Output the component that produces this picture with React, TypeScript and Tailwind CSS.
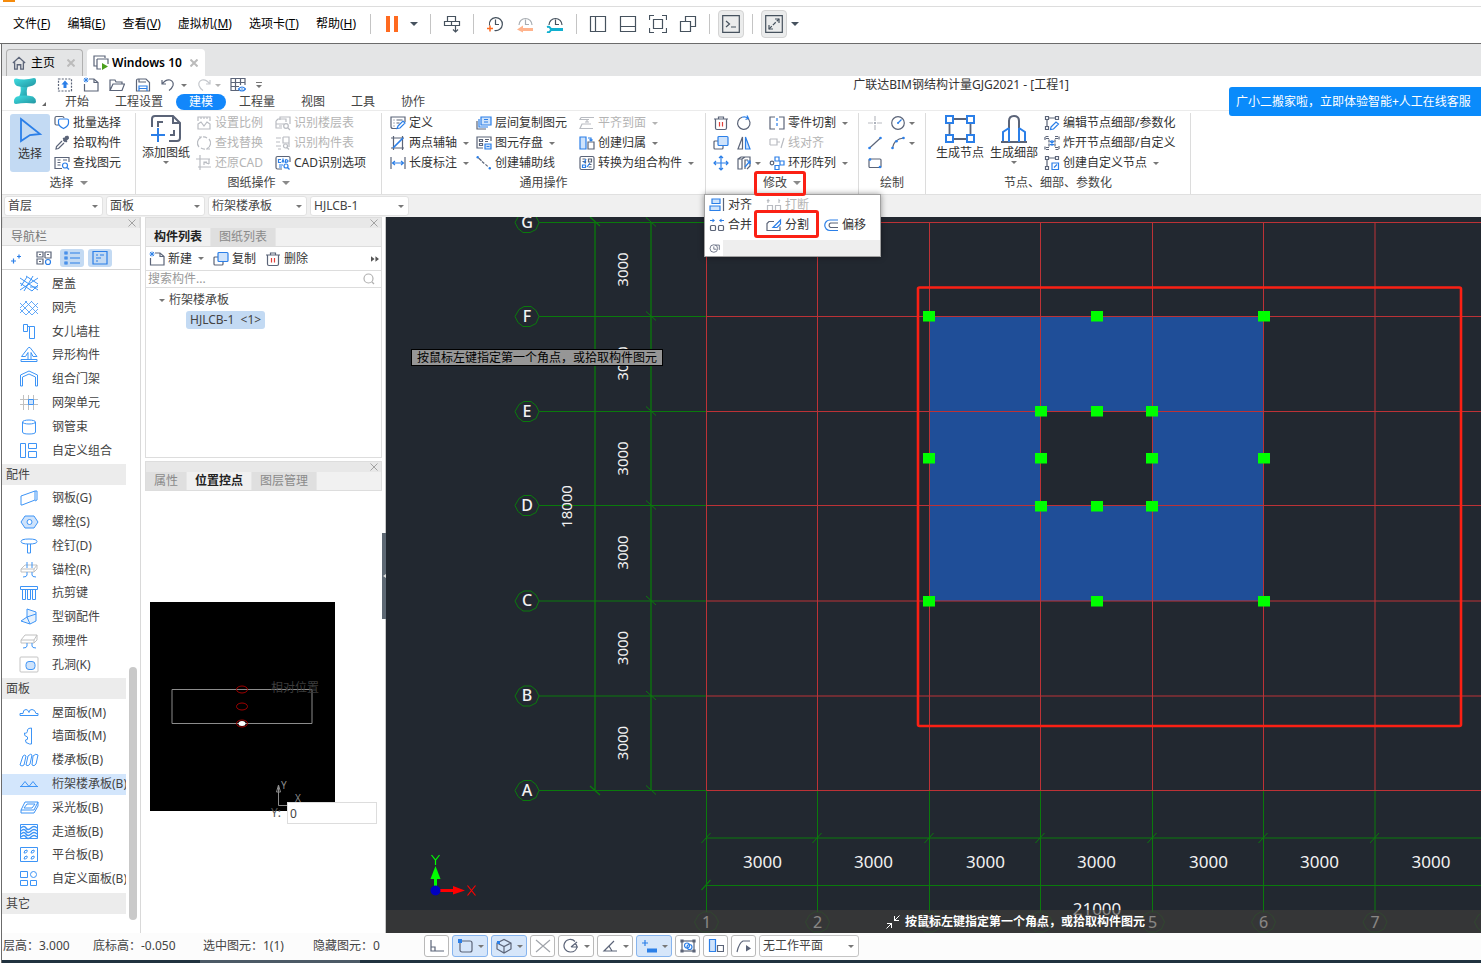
import React from "react";
import type { ReactNode } from "react";

const G = "#5b6478";
const B = "#2b7fe8";
const L = "#cfe3fb";
const D = "#b9bcc2";

/* ---------- small shared pieces ---------- */

function Ico({ children, size = 16, box = 16, color = G, stroke = 1.2 }: { children: ReactNode; size?: number; box?: number; color?: string; stroke?: number }) {
  return (
    <svg width={size} height={size} viewBox={`0 0 ${box} ${box}`} fill="none" stroke={color} strokeWidth={stroke} className="shrink-0" aria-hidden="true">
      {children}
    </svg>
  );
}

function Caret({ big = false, off = false }: { big?: boolean; off?: boolean }) {
  return big ? (
    <svg width="8" height="4" viewBox="0 0 8 4" className="shrink-0" aria-hidden="true"><path d="M0 0h8L4 4z" fill="#46525e" /></svg>
  ) : (
    <svg width="6" height="3" viewBox="0 0 6 3" className="shrink-0" aria-hidden="true"><path d="M0 0h6L3 3z" fill={off ? "#b4b4b4" : "#777777"} /></svg>
  );
}

function Cross({ light = false }: { light?: boolean }) {
  return (
    <svg width="8" height="8" viewBox="0 0 8 8" stroke={light ? "#bbbbbb" : "#a2a2a2"} strokeWidth={light ? 2 : 1} className="shrink-0" aria-hidden="true">
      <path d="M.5.5l7 7M7.500.5l-7 7" />
    </svg>
  );
}

/* ---------- ribbon icons, 16 x 16 ---------- */

const icons: Record<string, ReactNode> = {
  batch: <><path d="M5 10H2.500Q1 10 1 8.500V3q0-1.500 1.500-1.500H8Q10 1.500 10 3" /><path d="M4.500 5.500q0-1.500 1.500-1.500h7q1.500 0 1.500 1.500v2.500q0 3-5 5.500-5-2.500-5-5.500z" stroke={B} fill="#fff" /></>,
  dropper: <><path d="M9 3l4 4M8 6L2.500 11.500 2 14l2.500-.5L10 8" /><path d="M10 5l2-3q2-1 2 1l-3 3z" fill={G} strokeWidth={2} /></>,
  find: <><path d="M15 7V2.500H1v11h7" /><path d="M3.500 5h3M3.500 7.500h3M3.500 10h3M9 5h4" /><circle cx="11" cy="10.500" r="2.500" stroke={B} /><path d="M13 12.500l2 2" stroke={B} /></>,
  scale: <g stroke={D}><path d="M2 6V2h12v4M5 2v2M8 2v2M11 2v2M2 9v5h12V9l-3-2-3 4-3-4z" /></g>,
  replace: <g stroke={D}><path d="M5 2.500A6 6 0 003 12M6 2L3 2M11 13.500A6 6 0 0013 4M10 14l4 0M7 2a6 6 0 014 1M9 14a6 6 0 01-4-1" /></g>,
  restore: <g stroke={D}><path d="M0 4h14M4 0v12h11M13 4v5M13 9L8 7M8 10V7h3M2 12h2v3" /></g>,
  floorTable: <g stroke={D}><path d="M5 5V2h10v7M1 6l2-2h8v3M1 6v7h6M1 9h8M4 11h3" /><circle cx="11" cy="11" r="2.300" /><path d="M13 13l2 2" /></g>,
  partTable: <g stroke={D}><path d="M1 3h5M1 7h4M1 11h5M3 14h3M8 2h6v10M8 2v6h6" /><circle cx="10.500" cy="11" r="2" /><path d="M12 12.500l2 2" /></g>,
  cad: <><path d="M15 7V3q0-1.500-1.500-1.500h-11Q1 1.500 1 3v9.500Q1 14 2.500 14H7" /><path d="M6 4.500H3.500v3H6M7 7.500l1-3 1 3M10.500 4.500v3q2.500-.2 2.500-1.500t-2.500-1.500M4 10h4M4 12h3" stroke={B} /><circle cx="11" cy="11" r="2" stroke={B} /><path d="M12.500 12.500l2 2" stroke={B} /></>,
  define: <><path d="M15 7V2H1v9.500q0 2 2 2h4" /><path d="M3.500 5h1M6.500 5h6M3.500 8h1M6.500 8h3M3.500 11h1" /><path d="M8 11l5-5 2 2-5 5-3 .5z" stroke={B} fill="#fff" /></>,
  axis: <><path d="M1 3h13M1 13h13M3.500 1v14M12.500 1v14" /><path d="M3 13L13 3" stroke={B} strokeWidth={1.700} /></>,
  length: <><path d="M1 2v12M15 2v12" /><path d="M2.500 8h11M5 6L2.500 8 5 10M11 6l2.500 2L11 10" stroke={B} /></>,
  layerCopy: <><path d="M1 6v8h9" /><path d="M3 4v8h9" stroke={B} /><path d="M5 2h10v8H5z" stroke={B} fill={L} /><path d="M8 4.500h4M8 7h4" stroke={B} /></>,
  save: <><path d="M15 6V2H1v11h6" /><path d="M3.500 4.500h3v2h-3zM3.500 8.500h3v2h-3zM9 4.500h4M9 6.500h3" /><path d="M9 9h6v5H9zM10.500 11.500h3" stroke={B} fill={L} /></>,
  helper: <><path d="M2.500 3l3 2.700" stroke={G} /><path d="M6 6.500l6.500 5.500" strokeDasharray="3 1.500" /><circle cx="1.700" cy="2.200" r="1.200" fill={B} stroke="none" /><circle cx="13.800" cy="13.300" r="1.200" fill={B} stroke="none" /></>,
  flush: <g stroke={D}><path d="M2 2.500h13M2 2.500l-1 2h9M12 9H3l-2 4.500h13M8 5v2M6 7h4" /></g>,
  belong: <><path d="M1 2h6v12H1z" stroke={B} fill={L} /><path d="M9 7h6v7H9z" /><path d="M9 3h3v3M10.500 4.500L12 6l1.500-1.500" stroke={B} /></>,
  convert: <><rect x="1" y="1.500" width="14" height="13" rx="1.500" /><path d="M3.500 4h3M3.500 6.500h3v2M9.500 4v3h3V4zM9.500 9.500h3M9.500 12h3" /><path d="M7 4L5 8M11 8l-3 4M3.500 10h3v2.500h-3z" stroke={B} /></>,
  trash: <><path d="M1 4h14M5.500 4V2h5v2M2.500 4v9q0 1.500 1.500 1.500h8q1.500 0 1.500-1.500V4" /><path d="M6.500 7v4.500M9.500 7v4.500" stroke="#e0403a" /></>,
  rotate: <><path d="M11 2.800A6.200 6.200 0 116 2.200" /><path d="M6 2.200a6.200 6.200 0 016 1M11 .5l1.500 3-3 1" stroke={B} /></>,
  copy: <><path d="M5 6H2Q1 6 1 7v6q0 1 1 1h7q1 0 1-1v-2" /><rect x="5" y="1.500" width="10" height="9" rx="1" stroke={B} fill={L} /></>,
  mirror: <><path d="M6.500 2v12H2z" /><path d="M9.500 2v12H14z" stroke={B} fill={L} /></>,
  move: <g stroke={B}><path d="M8 1v14M1 8h14M6 3l2-2 2 2M6 13l2 2 2-2M3 6L1 8l2 2M13 6l2 2-2 2" /></g>,
  stretch: <><path d="M2 4l3-2h9v9l-3 3M2 4h4v10H2zM6 4l3-2M9 14V5h3" /><path d="M9 12l5-6M14 9V6h-3" stroke={B} /></>,
  cut: <><path d="M6 2H1v12h5M10 2h5v12h-5" /><path d="M8 3v10" stroke={B} strokeDasharray="3 2" /></>,
  lineAlign: <g stroke={D}><path d="M1 4h7v6H1M1 4v6M15 3l-3 10M8 7h3" /></g>,
  ring: <><circle cx="3" cy="8" r="1.800" /><g stroke={B}><path d="M6 2h4v4H6zM11 6h4v4h-4zM6 10.500h4v4H6z" /></g></>,
  point: <g stroke={D}><path d="M1 8h5M10 8h5M8 1v5M8 10v5" /><path d="M7 8h2" stroke={G} /></g>,
  circle: <><circle cx="8" cy="8" r="6.300" /><path d="M8 8l3.500-3.500" stroke={B} /><circle cx="8" cy="8" r="1" fill={B} stroke="none" /></>,
  line: <><path d="M2.500 13L13.500 3" /><circle cx="2.500" cy="13" r="1.300" fill={B} stroke="none" /><circle cx="13.500" cy="3" r="1.300" fill={B} stroke="none" /></>,
  arc: <><path d="M2.500 13Q4 4 13.500 3" /><circle cx="2.500" cy="13" r="1.300" fill={B} stroke="none" /><circle cx="6.500" cy="6.300" r="1.300" fill={B} stroke="none" /><circle cx="13.500" cy="3" r="1.300" fill={B} stroke="none" /></>,
  rect: <><rect x="2" y="4" width="12" height="8.500" rx="1" /><circle cx="3" cy="4.500" r="1.300" fill={B} stroke="none" /><circle cx="13" cy="12" r="1.300" fill={B} stroke="none" /></>,
  editNode: <><path d="M1.500 1.500h3v3h-3zM11.500 1.500h3v3h-3zM1.500 11.500h3v3h-3zM4.500 3h7M3 4.500v7" /><path d="M7 12l5-5 2.500 2-5 5-3 .5z" stroke={B} /></>,
  burst: <><path d="M1 5V1.500h4M11 1.500h4V5M15 11v3.500h-4M5 14.500H1V11M2 3.500h3v9H2M14 3.500h-3v9h3" strokeDasharray="3 1" /><path d="M6 6l4 4M10 6l-4 4M8 5v6" stroke={B} /></>,
  newNode: <><path d="M1.500 1.500h3v3h-3zM11.500 1.500h3v3h-3zM1.500 11.500h3v3h-3zM4.500 3h7M3 4.500v7" /><path d="M8 8h6.500v6.500H8zM10 12.500l3-3" stroke={B} /></>,
  align: <><path d="M3 2h8v4.500H3zM1 9h10v4.500H1z" stroke={B} fill={L} /><path d="M14.500 1v13" /></>,
  breakIt: <g stroke={D}><path d="M1.500 8.500h5v5h-5zM9.500 8.500h5v5h-5zM2 6V3l-1 1M13 6V3l1 1M2 3l1.500 1" /></g>,
  merge: <><rect x="1.500" y="8.500" width="5" height="5" rx="1" /><rect x="9.500" y="8.500" width="5" height="5" rx="1" /><path d="M1 3.500h3M15 3.500h-3" stroke={B} /><path d="M3.500 1.500l2.500 2-2.500 2zM12.500 1.500l-2.500 2 2.500 2z" fill={B} stroke="none" /></>,
  split: <><path d="M8 4.500H3l-2 2v7h13V9.500" /><path d="M7 10.500l7.500-7.500v4l-3.500 3.500z" stroke={B} /></>,
  offset: <><path d="M15 3H7a5 5 0 000 10.500h8" stroke={B} /><path d="M15 6H7.500a2.500 2.500 0 000 4.500H15" /></>,
  newFile: <><path d="M6 2h5l4 3.500V14H1.500V7" /><path d="M11 2v3.500h4" /><path d="M1 1l4 4M5 1L1 5M3 .5v5M.5 3h5" stroke={B} strokeWidth={0.900} /></>,
  upload: <><rect x="1.500" y="2" width="13" height="12" strokeDasharray="2 1.300" /><path d="M8 3.500l3.500 4h-2V11h-3V7.500h-2z" fill={B} stroke="none" /></>,
  open: <path d="M1 13.500V3h5l1 2h6v2M1 13.500L4 7h11.500l-2.500 6.500z" />,
  disk: <><path d="M1.500 3.500q0-1.500 1.500-1.500h8l3.500 3.500V14h-13zM4 2v3h7" /><path d="M4 14V9h8v5M4 11.500h8" stroke={B} /></>,
  undo: <path d="M2 3l0 4h4M2 7q4-5 8-4 4 1.500 3 5.500-1 3-4 5" />,
  redo: <path d="M14 3v4h-4M14 7q-4-5-8-4-4 1.500-3 5.500 1 3 4 5" stroke="#c5c8cd" />,
  gridEye: <><path d="M9 13.500H1v-12h14V8M1 5.500h14M1 9.500h8M5.500 1.500v12M10.500 1.500V8" /><path d="M8.500 12q3.500-4 7 0-3.500 4-7 0z" stroke={B} /><circle cx="12" cy="12" r=".8" fill={B} stroke="none" /></>,
  search: <><circle cx="7.500" cy="7.500" r="4.500" stroke="#b0b0b0" /><path d="M11 11l2 2" stroke="#b0b0b0" /></>,
};

function Tool({ icon, label, caret, off }: { icon: string; label?: string; caret?: boolean; off?: boolean }) {
  return (
    <button disabled={off} aria-label={label ?? icon} className={`flex h-5 items-center gap-[3px] whitespace-nowrap ${off ? "text-[#b4b4b4]" : "text-[#333]"}`}>
      <Ico>{icons[icon]}</Ico>
      {label && <span>{label}</span>}
      {caret && <span className={label ? "ml-[3px]" : ""}><Caret off={off} /></span>}
    </button>
  );
}

function Group({ w, label, caret, children, extra }: { w: string; label: string; caret?: boolean; children: ReactNode; extra?: ReactNode }) {
  return (
    <section className={`relative flex shrink-0 flex-col border-r border-[#dcdcdc] ${w}`}>
      <div className="flex h-[60px] items-start">{children}</div>
      <div className="flex h-5 items-center justify-center gap-[6px] text-[#444]">
        {label}
        {caret && <svg width="8" height="4" viewBox="0 0 8 4" aria-hidden="true"><path d="M0 0h8L4 4z" fill="#8a8a8a" /></svg>}
      </div>
      {extra}
    </section>
  );
}

function BigTool({ label, children, active, caret }: { label: string; children: ReactNode; active?: boolean; caret?: boolean }) {
  return (
    <button className={`flex h-[58px] flex-col items-center whitespace-nowrap rounded-[3px] text-[#333] ${active ? "mt-[1px] w-10 bg-[#c3daf3]" : "w-[54px]"}`}>
      <span className="flex h-8 items-center">{children}</span>
      <span className="leading-4">{label}</span>
      {caret && <Caret />}
    </button>
  );
}

/* ---------- navigation icons, 20 x 20 ---------- */

const nav: Record<string, ReactNode> = {
  roof: <path d="M1 4l18 12M1 9l12 8M7 2l12 8M19 4L1 16M14 2L5 17M19 13h-8M2 12l6-9M13 17l6-6" />,
  shell: <path d="M1 5l12 12M1 11l6 6M6 3l13 13M12 3l7 7M19 5L7 17M13 3L1 15M8 3L1 10M19 11l-6 6" strokeOpacity=".8" />,
  parapet: <path d="M4.500 2.500h4v7h-4zM10.500 4.500h5v12h-5zM8.500 4.500h2" />,
  special: <path d="M2 14.500h16v2H2zM9.500 2.500L2.500 11.500h4l2.500-4v7h3v-7l2 4h4l-7-9z" />,
  portal: <path d="M1.500 17V6L10 2l8.500 4v11h-2V8L10 5 3.500 8v9z" />,
  gridUnit: <><path d="M1 6.500h18M1 11.500h18M4.500 2v15M9.500 2v15M14.500 2v15" stroke="#c0c0c0" /><path d="M9.500 6.500h5v5h-5z" fill="#cfe3fb" /></>,
  tube: <><ellipse cx="10" cy="5" rx="6.500" ry="2" /><path d="M3.500 5v10q0 2 6.500 2t6.500-2V5" /></>,
  combo: <path d="M1.500 2.500h5v14h-5zM9.500 2.500h8v5h-8zM9.500 10.500h8v6h-8z" />,
  plate: <path d="M2 8l14-5v9L3 17H2zM16 3h2v9l-2 1" />,
  bolt: <><path d="M6 4h9l4 6-4 6H6l-4-6z" fill="#cfe3fb" /><circle cx="10.500" cy="10" r="2.500" fill="#fff" /></>,
  stud: <path d="M2 5.500q0-2.500 8-2.500t8 2.500-8 2.500-8-2.500zM8.500 8v9h3V8" />,
  anchor: <><path d="M2 9l4-4h12v4l-3 3H2zM2 9h13v3M15 9l3-4" stroke="#c0c0c0" /><path d="M8 2v6M13 2v6M8 12v3q0 2-4 2M13 12v3q0 2 4 2" /></>,
  shear: <path d="M1.500 3.500h17v3h-17zM3.500 6.500v10h3v-10M8.500 6.500v10h3v-10M13.500 6.500v10h3v-10" />,
  steel: <path d="M8 2l9 3v9l-6 3-9-3 6-4zM8 10l9-3M8 10l3 7" fill="#e6f1fd" />,
  embed: <><path d="M2 9l4-5h12v5l-3 3H2zM2 9h13v3M15 9l3-5" stroke="#c0c0c0" /><path d="M8 12v3q0 2-4 2M13 12v3q0 2 4 2" /></>,
  hole: <><rect x="1" y="2" width="18" height="15" stroke="#c4c4c4" rx="1" /><rect x="7" y="6.500" width="9" height="8" rx="3" fill="#cfe3fb" /></>,
  roofPanel: <path d="M1 12.500h18v-2h-2q-1-4-4-4t-3 3q-1-3-3-3-3 0-3 4H1z" />,
  wallPanel: <path d="M12.500 2v16h-2q-5-1-4-4 3 0 2-3-4-1-3-4 3 1 3-3 0-2 4-2z" />,
  floorPanel: <path d="M1 15L4 6q2-2 3 0L5 15q-2 2-4 0zM7 15l2-9q3-3 4-1l-2 9q-2 3-4 1zM13 15l1-9q3-3 5-1l-2 9q-2 3-4 1z" />,
  truss: <path d="M1 12.500h18M2 12.500l4-5 4 5 4-5 4 5" />,
  light: <path d="M6 4h13l-4 8H2zM2 12v3h13l4-7V4M8 6h8l-3 4H5z" />,
  walkway: <><path d="M1.500 2.500h17v14h-17z" /><path d="M2 6q3-3 5 0t5 0 6 0M2 9q3-3 5 0t5 0 6 0M2 12q3-3 5 0t5 0 6 0M2 15q3-3 5 0t5 0 6 0" strokeWidth="1.500" /></>,
  platform: <><path d="M1.500 2.500h17v14h-17z" /><path d="M5 8q0-3 3-3 1 3-3 3zM12 8q0-3 3-3 1 3-3 3zM5 14q0-3 3-3 1 3-3 3zM12 14q0-3 3-3 1 3-3 3z" /></>,
  customPanel: <><path d="M1.500 2.500h7v6h-7zM1.500 11.500h7v5h-7zM11.500 11.500h6v5h-6z" /><circle cx="14.500" cy="5.500" r="3" /></>,
};

const navRows: { icon?: string; label: string }[] = [
  { icon: "roof", label: "屋盖" }, { icon: "shell", label: "网壳" }, { icon: "parapet", label: "女儿墙柱" },
  { icon: "special", label: "异形构件" }, { icon: "portal", label: "组合门架" }, { icon: "gridUnit", label: "网架单元" },
  { icon: "tube", label: "钢管束" }, { icon: "combo", label: "自定义组合" }, { label: "配件" },
  { icon: "plate", label: "钢板(G)" }, { icon: "bolt", label: "螺栓(S)" }, { icon: "stud", label: "栓钉(D)" },
  { icon: "anchor", label: "锚栓(R)" }, { icon: "shear", label: "抗剪键" }, { icon: "steel", label: "型钢配件" },
  { icon: "embed", label: "预埋件" }, { icon: "hole", label: "孔洞(K)" }, { label: "面板" },
  { icon: "roofPanel", label: "屋面板(M)" }, { icon: "wallPanel", label: "墙面板(M)" }, { icon: "floorPanel", label: "楼承板(B)" },
  { icon: "truss", label: "桁架楼承板(B)" }, { icon: "light", label: "采光板(B)" }, { icon: "walkway", label: "走道板(B)" },
  { icon: "platform", label: "平台板(B)" }, { icon: "customPanel", label: "自定义面板(B)" }, { label: "其它" },
];

/* ---------- bars ---------- */

const menus = [["文件", "F"], ["编辑", "E"], ["查看", "V"], ["虚拟机", "M"], ["选项卡", "T"], ["帮助", "H"]];

function Sep() {
  return <span className="h-5 w-px shrink-0 bg-[#c4c4c4]" />;
}

function HostIcon({ name, children }: { name: string; children: ReactNode }) {
  return (
    <button aria-label={name} className="shrink-0">
      <Ico size={18} box={18} color="#46525e">{children}</Ico>
    </button>
  );
}

function MenuBar() {
  return (
    <div className="flex h-[37px] items-center border-b border-[#6b6b6b] bg-white pb-[2px] pl-[13px] text-black">
      <nav className="flex gap-[17px]">
        {menus.map(([t, k]) => (
          <button key={k} className="whitespace-nowrap">{t}(<u className="underline-offset-1">{k}</u>)</button>
        ))}
      </nav>
      <div className="ml-[14px] flex items-center">
        <Sep />
        <button aria-label="暂停" className="ml-[15px] flex gap-1"><span className="h-4 w-1 bg-[#ff6a1f]" /><span className="h-4 w-1 bg-[#ff6a1f]" /></button>
        <span className="mx-3 flex"><Caret big /></span>
        <Sep />
        <div className="mx-3 flex"><HostIcon name="发送"><path d="M4.500 1.500h8v5h-8zM1.500 6.500h15v4h-15zM8.500 6.500v4M12.500 11v6M10 14.500l2.500 2.500 2.500-2.500" /></HostIcon></div>
        <Sep />
        <div className="mx-3 flex gap-3">
          <HostIcon name="快照"><path d="M3.500 10.500a6.500 6.500 0 115 5M9.500 4.500v5h3.500" /><path d="M1 13.500h6M4 10.500v6" stroke="#ff6a1f" strokeWidth="1.500" /></HostIcon>
          <HostIcon name="恢复快照"><path d="M3 10a6.500 6.500 0 1113 0M9.500 4.500v5h3.500" stroke="#a8adb2" /><path d="M6 14.500h11" stroke="#ffb38c" strokeWidth="3" /><path d="M1 14.500l6-4v7z" fill="#ffb38c" stroke="none" /></HostIcon>
          <HostIcon name="管理快照"><path d="M3 10a6.500 6.500 0 1113 0M9.500 4.500v5h3.500" /><path d="M5 14.500h12" stroke="#11b0d0" strokeWidth="3" /><path d="M1 12q3-1 4 2.500-1 3.500-4 2.500" stroke="#11b0d0" strokeWidth="2" /></HostIcon>
        </div>
        <Sep />
        <div className="mx-3 flex gap-3">
          <HostIcon name="侧栏"><path d="M1.500 1.500h15v15h-15zM6.500 1.500v15" /></HostIcon>
          <HostIcon name="缩略图栏"><path d="M1.500 1.500h15v15h-15zM1.500 11.500h15" /></HostIcon>
          <HostIcon name="全屏"><path d="M4.500 4.500h9v9h-9zM.5 5V.5H5M13 .5h4.500V5M17.500 13v4.500H13M5 17.500H.5V13" /></HostIcon>
          <HostIcon name="独占"><path d="M1.500 6.500h10v10h-10zM6.500 6.500v-5h10v10h-5" /></HostIcon>
        </div>
        <Sep />
        <span className="mx-2 flex h-7 w-[26px] items-center justify-center rounded border border-[#d4d4d4] bg-[#ebecec]">
          <HostIcon name="控制台"><path d="M.7.7h16.600v16.600H.7zM4 6l3.500 3L4 12M9 12h5" /></HostIcon>
        </span>
        <Sep />
        <span className="mx-2 flex h-7 w-[26px] items-center justify-center rounded border border-[#d4d4d4] bg-[#ebecec]">
          <HostIcon name="拉伸"><path d="M.7.7h16.600v16.600H.7zM10 4h4v4M8 14H4v-4" /><path d="M4 14L14 4" strokeDasharray="4 1.500" /></HostIcon>
        </span>
        <span className="-ml-1 flex"><Caret big /></span>
      </div>
    </div>
  );
}

function HostTabs() {
  return (
    <div className="flex h-8 items-end gap-1 bg-[#e4e5e6] pl-1 text-black">
      <div className="flex h-[27px] w-[77px] items-center rounded-t border border-b-0 border-[#b0b0b0] pl-[5px]">
        <Ico size={14}><path d="M1 8l7-6.500L15 8M3 7v8h3v-5h4v5h3V7" strokeWidth="1.500" /></Ico>
        <span className="ml-[5px]">主页</span>
        <span className="ml-3"><Cross light /></span>
      </div>
      <div className="flex h-[27px] w-[118px] items-center rounded-t bg-white pl-[6px]">
        <Ico><path d="M4 11H1V1h11v2" /><path d="M4 4h11v5M4 4v10h4" /><path d="M9 8l6 3.500L9 15z" fill="#4ba01c" stroke="none" /></Ico>
        <span className="ml-[3px] whitespace-nowrap font-semibold">Windows 10</span>
        <span className="ml-auto mr-[7px]"><Cross light /></span>
      </div>
    </div>
  );
}

function TitleArea() {
  return (
    <div className="relative flex h-[35px] border-b border-[#ebebeb] bg-white">
      <button aria-label="应用菜单" className="relative w-[50px] shrink-0">
        <svg width="46" height="34" viewBox="0 0 46 34" aria-hidden="true">
          <defs>
            <linearGradient id="web" x1="0" y1="0" x2="1" y2="1"><stop offset="0" stopColor="#3fe0e4" /><stop offset="1" stopColor="#22939f" /></linearGradient>
          </defs>
          <path d="M18 8q2 7-1 13l9 1q-3-7 1-14z" fill="url(#web)" />
          <path d="M12 4q0-1.500 2-1.500 9 2 18-.5 2 0 2 2 .5 4-3 5.500-8 3-16 .5-3-1.500-3-6z" fill="url(#web)" />
          <path d="M12 25q0-3 3-4.500 8-2 16 0 3 2 3 5 0 2-2 2-10-1-18 .5-2.500 0-2-3z" fill="url(#web)" />
          <path d="M44 26v4h-4z" fill="#666" />
        </svg>
      </button>
      <div className="flex grow flex-col">
        <div className="flex h-[18px] items-center pl-[5px]">
          <div className="flex items-center gap-[10px]">
            {["upload", "newFile", "open", "disk"].map((n) => <button key={n} aria-label={n}><Ico>{icons[n]}</Ico></button>)}
          </div>
          <button aria-label="undo" className="ml-[9px] flex items-center gap-[5px]"><Ico>{icons.undo}</Ico><Caret /></button>
          <button aria-label="redo" className="ml-[9px] flex items-center gap-[3px]"><Ico>{icons.redo}</Ico><Caret off /></button>
          <button aria-label="grid" className="ml-[9px] flex items-center gap-[10px]"><Ico>{icons.gridEye}</Ico><svg width="6" height="6" viewBox="0 0 6 6" aria-hidden="true"><path d="M0 0h6v1H0zM0 3h6L3 6z" fill="#777" /></svg></button>
          <h1 className="ml-auto mr-[412px] whitespace-nowrap text-[#333]">广联达BIM钢结构计量GJG2021 - [工程1]</h1>
        </div>
        <div className="flex h-4 text-[#444]">
          {["开始", "工程设置", "建模", "工程量", "视图", "工具", "协作"].map((t) => (
            <button key={t} className={`h-4 px-[13px] leading-4 ${t === "建模" ? "rounded-full bg-[#1287fb] text-white" : ""}`}>{t}</button>
          ))}
        </div>
      </div>
      <a href="#service" className="absolute right-0 top-[11px] z-10 flex h-[29px] w-[252px] items-center whitespace-nowrap rounded-l-[3px] bg-[#0a8bfb] pl-[7px] text-white">广小二搬家啦，立即体验智能+人工在线客服</a>
    </div>
  );
}

function ModifyMenu() {
  return (
    <>
      <span className="pointer-events-none absolute left-12 top-[58px] z-30 h-[25px] w-[52px] rounded-[3px] border-[3px] border-[#fb2014]" />
      <div className="absolute -left-[2px] top-[81px] z-20 flex h-[63px] w-[177px] flex-col border border-[#a0a0a0] bg-white shadow-[0_0_6px_rgba(0,0,0,0.4)]">
        <div className="grid grid-cols-[57px_57px_auto] pl-1">
          <Tool icon="align" label="对齐" />
          <Tool icon="breakIt" label="打断" off />
          <span />
          <Tool icon="merge" label="合并" />
          <div className="relative">
            <Tool icon="split" label="分割" />
            <span className="pointer-events-none absolute -left-3 -top-[5px] h-7 w-[65px] rounded-[3px] border-[3px] border-[#fb2014]" />
          </div>
          <Tool icon="offset" label="偏移" />
        </div>
        <div className="mt-auto flex h-4 bg-[#eeeeee]">
          <button aria-label="固定" className="flex w-[18px] items-center justify-center bg-white"><Ico size={11}><circle cx="7" cy="8" r="5.500" /><path d="M7 5v4h4M9 3h6v7" /></Ico></button>
        </div>
      </div>
    </>
  );
}

function Ribbon() {
  return (
    <div className="flex h-[84px] border-b border-[#e0e0e0] bg-white pt-[2px]">
      <Group w="w-[134px]" label="选择" caret>
        <div className="pl-2"><BigTool label="选择" active><Ico size={28} box={28} color={B}><path d="M5 3l19 15-10 1-9 6z" strokeWidth="1.800" /></Ico></BigTool></div>
        <div className="pl-1"><Tool icon="batch" label="批量选择" /><Tool icon="dropper" label="拾取构件" /><Tool icon="find" label="查找图元" /></div>
      </Group>
      <Group w="w-[246px]" label="图纸操作" caret>
        <div className="pl-[3px]">
          <BigTool label="添加图纸" caret>
            <Ico size={32} box={32}><path d="M2 14V6q0-3 3-3h18l7 7v15q0 3-3 3h-8M8 14V9h5M20 22h4v-5M23 3v7h7" strokeWidth="2" /><path d="M1 22h14M8 15v14" stroke={B} strokeWidth="2" /></Ico>
          </BigTool>
        </div>
        <div className="pl-[3px]"><Tool icon="scale" label="设置比例" off /><Tool icon="replace" label="查找替换" off /><Tool icon="restore" label="还原CAD" off /></div>
        <div className="pl-3"><Tool icon="floorTable" label="识别楼层表" off /><Tool icon="partTable" label="识别构件表" off /><Tool icon="cad" label="CAD识别选项" /></div>
      </Group>
      <Group w="w-[324px]" label="通用操作">
        <div className="w-[94px] pl-2"><Tool icon="define" label="定义" /><Tool icon="axis" label="两点辅轴" caret /><Tool icon="length" label="长度标注" caret /></div>
        <div className="w-[103px]"><Tool icon="layerCopy" label="层间复制图元" /><Tool icon="save" label="图元存盘" caret /><Tool icon="helper" label="创建辅助线" /></div>
        <div><Tool icon="flush" label="平齐到面" caret off /><Tool icon="belong" label="创建归属" caret /><Tool icon="convert" label="转换为组合构件" caret /></div>
      </Group>
      <Group w="w-[153px]" label="修改" caret extra={<ModifyMenu />}>
        <div className="w-[30px] pl-[7px]"><Tool icon="trash" /><Tool icon="copy" /><Tool icon="move" /></div>
        <div className="w-[33px]"><Tool icon="rotate" /><Tool icon="mirror" /><Tool icon="stretch" caret /></div>
        <div><Tool icon="cut" label="零件切割" caret /><Tool icon="lineAlign" label="线对齐" off /><Tool icon="ring" label="环形阵列" caret /></div>
      </Group>
      <Group w="w-[67px]" label="绘制">
        <div className="w-[31px] pl-2"><Tool icon="point" /><Tool icon="line" /><Tool icon="rect" /></div>
        <div><Tool icon="circle" caret /><Tool icon="arc" caret /></div>
      </Group>
      <Group w="w-[265px]" label="节点、细部、参数化">
        <div className="flex pl-[7px]">
          <BigTool label="生成节点">
            <Ico size={30} box={30}><path d="M8 5h14M8 25h14M4.500 9v12M25.500 9v12" strokeWidth="1.800" /><path d="M1 2h7v7H1zM22 2h7v7h-7zM1 21h7v7H1zM22 21h7v7h-7z" stroke={B} strokeWidth="2" /></Ico>
          </BigTool>
          <BigTool label="生成细部" caret>
            <Ico size={30} box={30}><path d="M10 27V7q0-5 5-5t5 5v20M2 28h26" strokeWidth="2" /><path d="M4 27v-9l6-4M26 27v-9l-6-4M10 14v14M20 14v14" stroke={B} strokeWidth="2" /></Ico>
          </BigTool>
        </div>
        <div className="pl-[3px]"><Tool icon="editNode" label="编辑节点细部/参数化" /><Tool icon="burst" label="炸开节点细部/自定义" /><Tool icon="newNode" label="创建自定义节点" caret /></div>
      </Group>
    </div>
  );
}

function Combo({ label, value, w, h }: { label: string; value: string; w: string; h: string }) {
  return (
    <label className={`relative flex items-center ${w}`}>
      <span className="sr-only">{label}</span>
      <select defaultValue={value} className={`w-full appearance-none rounded-[3px] border bg-white py-0 pl-[3px] leading-[18px] text-[#444] outline-none ${h}`}>
        <option>{value}</option>
      </select>
      <span className="pointer-events-none absolute right-[5px] flex"><Caret /></span>
    </label>
  );
}

function PanelStrip() {
  return (
    <div className="flex h-[11px] shrink-0 items-center justify-end border border-b-0 border-[#dddddd] bg-[#e8e8e8] pr-[3px]">
      <button aria-label="关闭" className="flex"><Cross /></button>
    </div>
  );
}

function PanelTabs({ tabs, active }: { tabs: string[]; active: number }) {
  return (
    <div className="flex h-[19px] shrink-0 border border-t-0 border-[#dddddd] bg-[#f1f1f1]">
      {tabs.map((t, i) => (
        <button key={t} className={`border-r border-[#e6e6e6] px-2 ${i === active ? "bg-[#f0f0f0] font-bold text-[#222]" : "bg-[#dfdfdf] text-[#8a8a8a]"}`}>{t}</button>
      ))}
    </div>
  );
}

function NavPanel() {
  return (
    <aside className="flex w-[139px] shrink-0 flex-col border-r border-[#d9d9d9] bg-white">
      <PanelStrip />
      <h2 className="h-[18px] shrink-0 border-b border-[#dddddd] bg-[#f1f1f1] pl-[9px] leading-[18px] text-[#777]">导航栏</h2>
      <div className="flex h-6 shrink-0 items-center border-b border-[#d5d5d5] pl-[6px]">
        <button aria-label="添加"><Ico color={B}><path d="M3 11h5M5.500 8.500v5M9 6.500h4M11 4.500v4" /></Ico></button>
        <button aria-label="分组" className="ml-3"><Ico><path d="M1 2h6v5H1zM9 2h6v6H9M9 2v6M1 9h6v5H1zM3 4.500h2M11 4.500h2M3 11.500h2" /><circle cx="12" cy="12" r="2.500" stroke={B} /></Ico></button>
        <button aria-label="列表" className="ml-2 flex h-[18px] w-6 items-center justify-center rounded-[3px] bg-[#c3daf3]"><Ico color={B}><path d="M1 2h2v2H1zM1 7h2v2H1zM1 12h2v2H1zM6 3h10M6 8h10M6 13h10" /></Ico></button>
        <button aria-label="卡片" className="ml-1 flex h-[18px] w-6 items-center justify-center rounded-[3px] bg-[#c3daf3]"><Ico color={B}><path d="M1 1.500h14v12.500H1zM4 5h2M8 5h4M4 8h5M4 11h2" /></Ico></button>
      </div>
      <div className="flex min-h-0 grow pb-[18px] pt-[2px]">
        <ul className="grid h-full w-[124px] auto-rows-fr overflow-hidden text-[#444]">
          {navRows.map((r) =>
            r.icon ? (
              <li key={r.label} className="flex min-h-0 items-center">
                <button className={`flex h-[21px] w-full items-center whitespace-nowrap pl-[17px] ${r.icon === "truss" ? "bg-[#d3e6fc]" : ""}`}>
                  <Ico size={20} box={20} color="#3d94f6" stroke={1}>{nav[r.icon]}</Ico>
                  <span className="ml-[13px]">{r.label}</span>
                </button>
              </li>
            ) : (
              <li key={r.label} className="flex min-h-0 items-center"><h3 className="h-[21px] w-full bg-[#ececec] pl-1 leading-[21px]">{r.label}</h3></li>
            )
          )}
        </ul>
        <div className="-mb-[5px] ml-[3px] flex w-2 flex-col justify-end"><span className="h-[39%] rounded-full bg-[#c9c9c9]" /></div>
      </div>
    </aside>
  );
}

function ComponentPanel() {
  return (
    <div className="ml-1 flex w-[237px] shrink-0 flex-col">
      <section className="flex h-[241px] shrink-0 flex-col">
        <PanelStrip />
        <PanelTabs tabs={["构件列表", "图纸列表"]} active={0} />
        <div className="flex grow flex-col border border-t-0 border-[#dddddd]">
          <div className="flex h-6 shrink-0 items-center gap-[9px] border-b border-[#dddddd] pl-[3px] text-[#333]">
            <Tool icon="newFile" label="新建" caret />
            <Tool icon="copy" label="复制" />
            <Tool icon="trash" label="删除" />
            <button aria-label="更多" className="ml-auto mr-[2px] flex"><svg width="8" height="6" viewBox="0 0 9 6" aria-hidden="true"><path d="M0 0l4 3-4 3zM5 0l4 3-4 3z" fill="#555" /></svg></button>
          </div>
          <div className="flex h-[17px] shrink-0 items-center border-b border-[#dddddd]">
            <input aria-label="搜索构件" placeholder="搜索构件..." className="h-4 min-w-0 grow bg-transparent pl-[2px] outline-none placeholder:text-[#999]" />
            <span className="mr-1"><Ico>{icons.search}</Ico></span>
          </div>
          <div className="pl-[13px] pt-1 text-[#444]">
            <div className="flex h-4 items-center gap-1"><Caret />桁架楼承板</div>
            <button className="ml-[27px] mt-[3px] flex h-[18px] items-center whitespace-pre rounded-[3px] bg-[#c3daf3] px-1">{"HJLCB-1  <1>"}</button>
          </div>
        </div>
      </section>
      <section className="mt-[3px] flex grow flex-col">
        <PanelStrip />
        <PanelTabs tabs={["属性", "位置控点", "图层管理"]} active={1} />
        <div className="relative ml-[5px] mt-[111px] h-[223px] w-[228px]">
          <svg width="185" height="209" viewBox="0 0 185 209" fill="none" className="block bg-black" aria-hidden="true">
            <path d="M22 87.500h140v34H22z" stroke="#8c8c8c" />
            <g stroke="#a00000"><ellipse cx="92" cy="87.500" rx="5.500" ry="3.500" /><ellipse cx="92" cy="104.500" rx="5.500" ry="3.500" /><ellipse cx="92" cy="121.500" rx="5.500" ry="3.500" /></g>
            <ellipse cx="92" cy="121.500" rx="3.500" ry="2.500" fill="#fff" />
            <path d="M128.500 184v19.500h10M128.500 183l-2 7h4z" stroke="#8c8c8c" />
            <text x="131" y="187" fontSize="10" fill="#8c8c8c">Y</text>
            <text x="145" y="200" fontSize="10" fill="#8c8c8c">X</text>
          </svg>
          <span className="absolute left-[121px] top-[78px] text-[#3c3c3c]">相对位置</span>
          <label htmlFor="offset-y" className="absolute left-[121px] top-[203px] text-[#555]">Y:</label>
          <input id="offset-y" defaultValue="0" className="absolute left-[137px] top-[200px] h-[22px] w-[90px] border border-[#dddddd] bg-white pl-[2px] text-[#444] outline-none" />
        </div>
      </section>
    </div>
  );
}

/* ---------- drawing canvas ---------- */

const xs = [706.5, 817.5, 929.5, 1040.5, 1152.5, 1263.5, 1375, 1486.5];
const ys = [222.5, 316.5, 411.5, 505.5, 601, 696, 790.5];
const grips = [
  [929, 316], [1097, 316], [1264, 316], [929, 458], [1264, 458], [929, 601], [1097, 601], [1264, 601],
  [1041, 411], [1097, 411], [1152, 411], [1041, 458], [1152, 458], [1041, 506], [1097, 506], [1152, 506],
];

function Canvas() {
  return (
    <main className="relative min-w-0 grow overflow-hidden bg-[#222830]">
      <svg className="block h-full w-full font-['Noto_Sans']" viewBox="386 217 1095 716" preserveAspectRatio="xMinYMin slice" role="img" aria-label="轴网平面图">
        <path d="M929 316h335v285H929zM1041 411v95h111v-95z" fill="#1f4e98" fillRule="evenodd" />
        <g stroke="#bc3236" strokeWidth="1">
          {xs.map((x) => <line key={x} x1={x} x2={x} y1={222} y2={790.5} />)}
          {ys.map((y) => <line key={y} x1={706.5} x2={1481} y1={y} y2={y} />)}
        </g>
        <g stroke="#0a7a0c" strokeWidth="1" fill="none">
          {ys.map((y) => (
            <g key={y}>
              <line x1="539" x2="706" y1={y} y2={y} />
              <path d={`M646 ${y - 5}l10 9`} />
              <polygon points={`515,${y} 519,${y - 7} 524,${y - 10} 531,${y - 10} 536,${y - 6} 539,${y} 536,${y + 7} 530,${y + 10} 523,${y + 10} 518,${y + 6}`} />
            </g>
          ))}
          <path d="M595 222v569M651 222v569M590 217l10 9M590 786l10 9" strokeWidth="1.300" />
          {xs.map((x) => (
            <g key={x}>
              <line x1={x} x2={x} y1="791" y2="912" />
              <path d={`M${x - 5} 843l9-10`} />
              <polygon strokeOpacity=".5" points={`${x - 12},922 ${x - 8},915 ${x - 3},912 ${x + 4},912 ${x + 9},916 ${x + 12},922 ${x + 9},929 ${x + 3},932 ${x - 4},932 ${x - 9},928`} />
            </g>
          ))}
          <path d="M706 838h775M706 885.500h775M701.500 890l9-10" strokeWidth="1.200" />
        </g>
        <g fill="#f2f2f2" textAnchor="middle" fontSize="16" fontWeight="500">
          {ys.map((y, i) => <text key={y} x="527" y={y + 5}>{"GFEDCBA"[i]}</text>)}
        </g>
        <g fill="#f2f2f2" textAnchor="middle" fontSize="17">
          {xs.slice(0, 7).map((x) => <text key={x} x={x + 56} y="868">3000</text>)}
          <text x="1097" y="915">21000</text>
          {xs.slice(0, 7).map((x, i) => <text key={`n${x}`} x={x} y="928" fontSize="16">{i + 1}</text>)}
        </g>
        <g fill="#f2f2f2" textAnchor="middle" fontSize="15">
          {ys.slice(0, 6).map((y) => <text key={y} transform={`translate(628 ${y + 47}) rotate(-90)`}>3000</text>)}
          <text transform="translate(572 506.500) rotate(-90)">18000</text>
        </g>
        {grips.map(([x, y]) => <rect key={`${x}-${y}`} x={x - 6} y={y - 5} width="12" height="10.500" fill="#00ff00" />)}
        <rect x="918" y="287.500" width="543" height="438.500" rx="1.500" fill="none" stroke="#fb2014" strokeWidth="2.600" />
        <path d="M435.500 889v-10" stroke="#00ff00" strokeWidth="3" />
        <path d="M435.500 866l5 13h-10z" fill="#00ff00" />
        <path d="M439 890.500h14" stroke="#f00" strokeWidth="3" />
        <path d="M453 886l12 4.500-12 4z" fill="#f00" />
        <circle cx="435.500" cy="890.500" r="5" fill="#0000c0" />
        <path d="M431.500 855l4 5 4-5M435.500 860v5" stroke="#00ff00" strokeWidth="1.200" fill="none" />
        <path d="M467.500 885.500l8 10M475.500 885.500l-8 10" stroke="#f00" strokeWidth="1.200" />
      </svg>
      <div className="absolute left-[25px] top-[132px] flex h-[17px] items-center whitespace-nowrap border border-black bg-[#969696] px-[5px] text-black">按鼠标左键指定第一个角点，或拾取构件图元</div>
      <div className="absolute inset-x-0 bottom-0 flex h-[23px] items-center bg-[#43403c]/60 pl-[500px] text-white">
        <svg width="14" height="14" viewBox="0 0 14 14" stroke="#fff" fill="none" aria-hidden="true"><path d="M13.500.5L8 6M8.500 1v4.500H13M.5 13.500L6 8M1 8.500h4.500V13" /></svg>
        <span className="ml-[5px] whitespace-nowrap font-bold">按鼠标左键指定第一个角点，或拾取构件图元</span>
      </div>
    </main>
  );
}

/* ---------- status bar ---------- */

const snaps: { name: string; on?: boolean; caret?: boolean; art: ReactNode }[] = [
  { name: "正交", art: <path d="M2 2v11h13M2 9h4v4" /> },
  { name: "矩形选择", on: true, caret: true, art: <><rect x="3" y="3" width="12" height="11" rx="2" /><path d="M1 1h4v4H1z" fill={B} stroke="none" /></> },
  { name: "体选择", on: true, caret: true, art: <><path d="M1 5l7-3.500L15 5v6l-7 4-7-4zM1 5l7 3.500L15 5M8 8.500V15" /><path d="M1 3h3v3H1z" fill={B} stroke="none" /></> },
  { name: "取消捕捉", art: <path d="M1 2l14 12M15 2L1 14" stroke="#a0a4aa" /> },
  { name: "极轴", caret: true, art: <><path d="M12 3.500A6.300 6.300 0 107.500 14q5.500 0 6.500-5" /><path d="M8 9l6-5M8 9h7M12 5.500q2 1.500 2 3.500" /></> },
  { name: "角度", caret: true, art: <path d="M15 13H2L12 3M7 8l3 5" /> },
  { name: "动态输入", on: true, caret: true, art: <g stroke={B}><path d="M1 5h6M4 2v6" /><path d="M6 12.500h10" strokeWidth="4" /></g> },
  { name: "范围", art: <><rect x="2" y="3" width="12" height="10" /><path d="M1 2h2v2H1zM13 2h2v2h-2zM1 12h2v2H1zM13 12h2v2h-2z" fill={G} /><circle cx="7" cy="7.500" r="2.500" stroke={B} /><circle cx="9.500" cy="9" r="2.500" stroke={B} /></> },
  { name: "对比", art: <><path d="M1.500 1.500h6v12h-6z" stroke={B} fill={L} /><path d="M9.500 7.500h6v6h-6z" /></> },
  { name: "路径", art: <><path d="M1 14Q3 5 7 3h7" /><path d="M10 7l5 3.500-5 3z" fill={G} stroke="none" /></> },
];

function StatusBar() {
  return (
    <footer className="flex h-[27px] shrink-0 items-center bg-[#fcfcfc] pb-px text-[#444]">
      <div className="grid w-[422px] shrink-0 grid-cols-[90px_110px_110px_auto] whitespace-nowrap pl-px">
        <span>层高：3.000</span><span>底标高：-0.050</span><span>选中图元：1(1)</span><span>隐藏图元：0</span>
      </div>
      <div className="flex gap-[3px]">
        {snaps.map((s) => (
          <button key={s.name} aria-label={s.name} className={`flex h-[22px] items-center justify-center gap-[5px] rounded-[3px] border ${s.caret ? "w-9" : "w-[25px]"} ${s.on ? "border-[#86b4ee] bg-[#d6e6fa]" : "border-[#b9b9b9] bg-white"}`}>
            <Ico>{s.art}</Ico>
            {s.caret && <Caret />}
          </button>
        ))}
        <Combo label="工作平面" value="无工作平面" w="w-[100px]" h="h-[22px] border-[#c4c4c4]" />
      </div>
    </footer>
  );
}

export default function App() {
  return (
    <div className="flex h-screen min-h-[760px] flex-col overflow-hidden bg-white font-['Noto_Sans','Noto_Sans_CJK_SC',sans-serif] text-[12px] leading-4">
      <div className="h-[7px] shrink-0 border-b border-[#dddddd] pl-[3px]"><div className="h-[2px] w-3 bg-[#f58b0c]" /></div>
      <div className="shrink-0"><MenuBar /></div>
      <div className="ml-px flex min-h-0 grow flex-col border-l border-[#6b6b6b]">
        <div className="shrink-0"><HostTabs /><TitleArea /><Ribbon /></div>
        <div className="flex h-[22px] shrink-0 items-center gap-[3px] bg-[#f0f0f0] pl-[2px]">
          {[["楼层", "首层"], ["类别", "面板"], ["构件类型", "桁架楼承板"], ["构件", "HJLCB-1"]].map(([k, v]) => (
            <Combo key={k} label={k} value={v} w="w-[99px]" h="h-5 border-[#e2e2e2]" />
          ))}
        </div>
        <div className="flex min-h-0 grow">
          <NavPanel />
          <ComponentPanel />
          <div className="flex w-1 shrink-0 flex-col border-r border-[#c8c8c8] pt-[316px]">
            <button aria-label="折叠" className="-mr-px flex h-[86px] items-center justify-end bg-[#5d6873]"><svg width="3" height="4" viewBox="0 0 3 4" aria-hidden="true"><path d="M3 0v4L0 2z" fill="#ddd" /></svg></button>
          </div>
          <Canvas />
        </div>
        <StatusBar />
        <div className="h-[3px] shrink-0 bg-[#20323f] pl-[198px]"><div className="h-full w-40 bg-[#4c5a66]" /></div>
      </div>
    </div>
  );
}
